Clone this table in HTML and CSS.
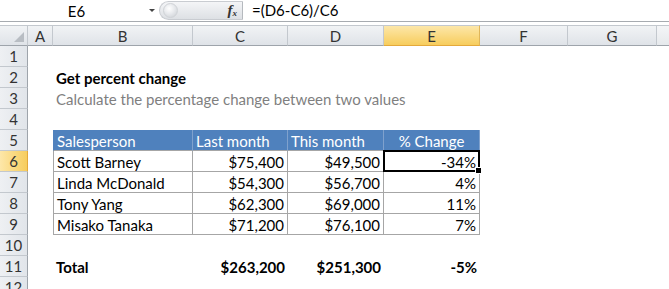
FILE: index.html
```html
<!DOCTYPE html>
<html>
<head>
<meta charset="utf-8">
<link rel="stylesheet" href="styles.css">
</head>
<body>
<div class="fbar">
  <div class="namebox"><span class="nb-text">E6</span><span class="nb-arrow"></span></div>
  <div class="fxbox"><span class="grip"></span><span class="fx">f<sub>x</sub></span></div>
  <div class="formula">=(D6-C6)/C6</div>
</div>
<div class="sheet">
  <div class="row hdr">
    <div class="corner"><span class="tri"></span></div>
    <div class="ch">A</div><div class="ch">B</div><div class="ch">C</div><div class="ch">D</div>
    <div class="ch sel">E</div><div class="ch">F</div><div class="ch">G</div><div class="ch last"></div>
  </div>
  <div class="row"><div class="rh">1</div></div>
  <div class="row"><div class="rh">2</div><div class="cell b title">Get percent change</div></div>
  <div class="row"><div class="rh">3</div><div class="cell b sub">Calculate the percentage change between two values</div></div>
  <div class="row"><div class="rh">4</div></div>
  <div class="row"><div class="rh">5</div>
    <div class="cell b th first">Salesperson</div><div class="cell c th">Last month</div><div class="cell d th">This month</div><div class="cell e th ctr">% Change</div>
  </div>
  <div class="row"><div class="rh sel">6</div>
    <div class="cell b td first">Scott Barney</div><div class="cell c td num">$75,400</div><div class="cell d td num">$49,500</div><div class="cell e td num active">-34%</div>
  </div>
  <div class="row"><div class="rh">7</div>
    <div class="cell b td first">Linda McDonald</div><div class="cell c td num">$54,300</div><div class="cell d td num">$56,700</div><div class="cell e td num">4%</div>
  </div>
  <div class="row"><div class="rh">8</div>
    <div class="cell b td first">Tony Yang</div><div class="cell c td num">$62,300</div><div class="cell d td num">$69,000</div><div class="cell e td num">11%</div>
  </div>
  <div class="row"><div class="rh">9</div>
    <div class="cell b td first">Misako Tanaka</div><div class="cell c td num">$71,200</div><div class="cell d td num">$76,100</div><div class="cell e td num">7%</div>
  </div>
  <div class="row"><div class="rh">10</div></div>
  <div class="row"><div class="rh">11</div>
    <div class="cell b bold">Total</div><div class="cell c bold num">$263,200</div><div class="cell d bold num">$251,300</div><div class="cell e bold num">-5%</div>
  </div>
  <div class="row"><div class="rh">12</div></div>
</div>
</body>
</html>
```
FILE: styles.css
```css
html, body {
  margin: 0;
  padding: 0;
  background: #fff;
  overflow: hidden;
}
body {
  width: 669px;
  height: 289px;
  font-family: Lato, "Noto Sans", sans-serif;
  font-size: 15px;
  color: #000;
}
.fbar {
  display: flex;
  height: 21px;
  border-bottom: 1px solid #a7abb0;
  margin-bottom: 3px;
}
.namebox {
  width: 159px;
  display: flex;
  align-items: center;
}
.nb-text {
  flex: 1;
  text-align: center;
  font-size: 15px;
  padding-left: 4px;
}
.nb-arrow {
  width: 0;
  height: 0;
  border-left: 3px solid transparent;
  border-right: 3px solid transparent;
  border-top: 3px solid #444;
  margin-right: 4px;
}
.fxbox {
  width: 84px;
  height: 19px;
  margin-top: 1px;
  border-radius: 10px 0 0 10px;
  background: linear-gradient(#f4f5f7, #dde0e4);
  border: 1px solid #c9ccd1;
  border-right: 1px solid #b5b9be;
  box-sizing: border-box;
  display: flex;
  align-items: center;
  justify-content: space-between;
  padding: 0 5px 0 3px;
}
.grip {
  width: 13px;
  height: 13px;
  border-radius: 50%;
  background: radial-gradient(circle at 40% 35%, #ffffff 0, #e8eaed 45%, #c9cdd2 100%);
  border: 1px solid #d0d3d7;
}
.fx {
  font-family: "Liberation Serif", serif;
  font-style: italic;
  font-weight: bold;
  font-size: 15px;
  color: #333;
  line-height: 1;
}
.fx sub {
  font-size: 9px;
  vertical-align: -1px;
}
.formula {
  flex: 1;
  padding-left: 9px;
  line-height: 21px;
  font-size: 15px;
}
.sheet {
  display: flex;
  flex-direction: column;
}
.row {
  display: grid;
  grid-template-columns: 28px 25px 140px 95px 96px 96px 88px 89px 12px;
  grid-template-rows: 21px;
  height: 21px;
  flex: none;
}
.hdr .ch, .corner {
  background: linear-gradient(#f1f3f5, #dfe3e8);
  border-right: 1px solid #c3c8ce;
  border-bottom: 1px solid #9ea4ab;
  border-top: 1px solid #c3c8ce;
  box-sizing: border-box;
  text-align: center;
  line-height: 20px;
  font-size: 15px;
  color: #333;
}
.hdr .ch.last {
  border-right: none;
  background: linear-gradient(#f4f5f7, #e6e9ec);
}
.corner {
  position: relative;
}
.tri {
  position: absolute;
  right: 3px;
  bottom: 3px;
  width: 0;
  height: 0;
  border-left: 10px solid transparent;
  border-bottom: 10px solid #b8bdc3;
}
.hdr .ch.sel {
  background: linear-gradient(#fde7a9, #f7cd5d);
  border-bottom: 1px solid #e4a93b;
  border-right: 1px solid #e0b659;
}
.rh {
  grid-column: 1;
  background: linear-gradient(90deg, #eef0f3, #e1e5ea);
  border-right: 1px solid #9ea4ab;
  border-bottom: 1px solid #c3c8ce;
  box-sizing: border-box;
  text-align: center;
  line-height: 21px;
  font-size: 15px;
  color: #333;
}
.rh.sel {
  background: linear-gradient(90deg, #fde7a9, #f7cd5d);
  border-right: 1px solid #e4a93b;
}
.cell {
  grid-row: 1;
  line-height: 20px;
  padding: 1px 3px 0;
  white-space: nowrap;
  box-sizing: border-box;
}
.b { grid-column: 3; }
.c { grid-column: 4; }
.d { grid-column: 5; }
.e { grid-column: 6; }
.title {
  font-weight: bold;
}
.sub {
  color: #7f7f7f;
}
.th {
  background: #4f81bd;
  color: #fff;
  border-right: 1px solid #7fa1cd;
  border-bottom: 1px solid #a6a6a6;
}
.th.first, .td.first {
  border-left: 1px solid #a6a6a6;
}
.th.first { border-left-color: #4f81bd; }
.ctr { text-align: center; }
.td {
  border-right: 1px solid #a6a6a6;
  border-bottom: 1px solid #a6a6a6;
}
.num { text-align: right; }
.bold { font-weight: bold; }
.active {
  position: relative;
}
.active::after {
  content: "";
  position: absolute;
  left: -1px;
  top: -1px;
  right: -1px;
  bottom: -1px;
  border: 2px solid #000;
}
.active::before {
  content: "";
  position: absolute;
  right: -3px;
  bottom: -3px;
  width: 5px;
  height: 5px;
  background: #000;
  border: 1px solid #fff;
  z-index: 2;
}
```
